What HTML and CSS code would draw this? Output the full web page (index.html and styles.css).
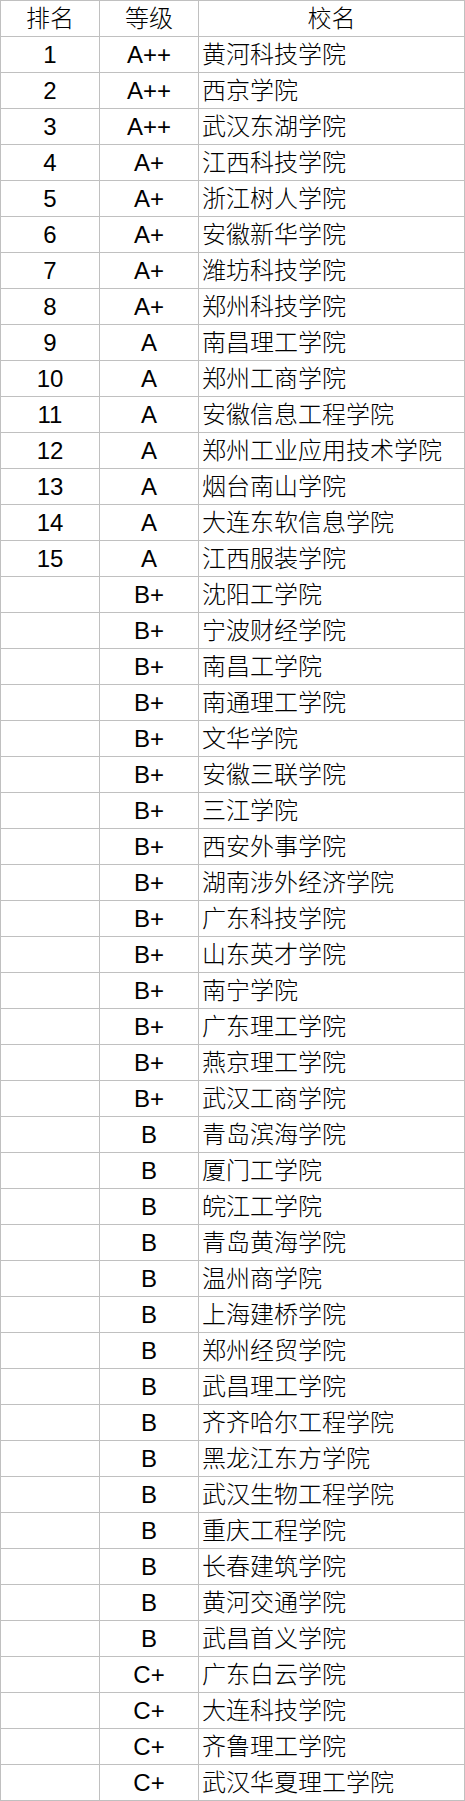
FILE: index.html
```html
<!DOCTYPE html>
<html lang="zh-CN">
<head>
<meta charset="utf-8">
<title>排名</title>
<link rel="stylesheet" href="styles.css">
</head>
<body>
<div class="sheet">
  <div class="c head">排名</div><div class="c head">等级</div><div class="c head">校名</div>
  <div class="c">1</div><div class="c">A++</div><div class="c name">黄河科技学院</div>
  <div class="c">2</div><div class="c">A++</div><div class="c name">西京学院</div>
  <div class="c">3</div><div class="c">A++</div><div class="c name">武汉东湖学院</div>
  <div class="c">4</div><div class="c">A+</div><div class="c name">江西科技学院</div>
  <div class="c">5</div><div class="c">A+</div><div class="c name">浙江树人学院</div>
  <div class="c">6</div><div class="c">A+</div><div class="c name">安徽新华学院</div>
  <div class="c">7</div><div class="c">A+</div><div class="c name">潍坊科技学院</div>
  <div class="c">8</div><div class="c">A+</div><div class="c name">郑州科技学院</div>
  <div class="c">9</div><div class="c">A</div><div class="c name">南昌理工学院</div>
  <div class="c">10</div><div class="c">A</div><div class="c name">郑州工商学院</div>
  <div class="c">11</div><div class="c">A</div><div class="c name">安徽信息工程学院</div>
  <div class="c">12</div><div class="c">A</div><div class="c name">郑州工业应用技术学院</div>
  <div class="c">13</div><div class="c">A</div><div class="c name">烟台南山学院</div>
  <div class="c">14</div><div class="c">A</div><div class="c name">大连东软信息学院</div>
  <div class="c">15</div><div class="c">A</div><div class="c name">江西服装学院</div>
  <div class="c"></div><div class="c">B+</div><div class="c name">沈阳工学院</div>
  <div class="c"></div><div class="c">B+</div><div class="c name">宁波财经学院</div>
  <div class="c"></div><div class="c">B+</div><div class="c name">南昌工学院</div>
  <div class="c"></div><div class="c">B+</div><div class="c name">南通理工学院</div>
  <div class="c"></div><div class="c">B+</div><div class="c name">文华学院</div>
  <div class="c"></div><div class="c">B+</div><div class="c name">安徽三联学院</div>
  <div class="c"></div><div class="c">B+</div><div class="c name">三江学院</div>
  <div class="c"></div><div class="c">B+</div><div class="c name">西安外事学院</div>
  <div class="c"></div><div class="c">B+</div><div class="c name">湖南涉外经济学院</div>
  <div class="c"></div><div class="c">B+</div><div class="c name">广东科技学院</div>
  <div class="c"></div><div class="c">B+</div><div class="c name">山东英才学院</div>
  <div class="c"></div><div class="c">B+</div><div class="c name">南宁学院</div>
  <div class="c"></div><div class="c">B+</div><div class="c name">广东理工学院</div>
  <div class="c"></div><div class="c">B+</div><div class="c name">燕京理工学院</div>
  <div class="c"></div><div class="c">B+</div><div class="c name">武汉工商学院</div>
  <div class="c"></div><div class="c">B</div><div class="c name">青岛滨海学院</div>
  <div class="c"></div><div class="c">B</div><div class="c name">厦门工学院</div>
  <div class="c"></div><div class="c">B</div><div class="c name">皖江工学院</div>
  <div class="c"></div><div class="c">B</div><div class="c name">青岛黄海学院</div>
  <div class="c"></div><div class="c">B</div><div class="c name">温州商学院</div>
  <div class="c"></div><div class="c">B</div><div class="c name">上海建桥学院</div>
  <div class="c"></div><div class="c">B</div><div class="c name">郑州经贸学院</div>
  <div class="c"></div><div class="c">B</div><div class="c name">武昌理工学院</div>
  <div class="c"></div><div class="c">B</div><div class="c name">齐齐哈尔工程学院</div>
  <div class="c"></div><div class="c">B</div><div class="c name">黑龙江东方学院</div>
  <div class="c"></div><div class="c">B</div><div class="c name">武汉生物工程学院</div>
  <div class="c"></div><div class="c">B</div><div class="c name">重庆工程学院</div>
  <div class="c"></div><div class="c">B</div><div class="c name">长春建筑学院</div>
  <div class="c"></div><div class="c">B</div><div class="c name">黄河交通学院</div>
  <div class="c"></div><div class="c">B</div><div class="c name">武昌首义学院</div>
  <div class="c"></div><div class="c">C+</div><div class="c name">广东白云学院</div>
  <div class="c"></div><div class="c">C+</div><div class="c name">大连科技学院</div>
  <div class="c"></div><div class="c">C+</div><div class="c name">齐鲁理工学院</div>
  <div class="c"></div><div class="c">C+</div><div class="c name">武汉华夏理工学院</div>
</div>
</body>
</html>
```
FILE: styles.css
```css
html, body {
  margin: 0;
  padding: 0;
  background: #ffffff;
}
.sheet {
  display: grid;
  grid-template-columns: 98px 98px 265px;
  grid-auto-rows: 35px;
  gap: 1px;
  padding: 1px;
  width: 463px;
  background: #c0c0c0;
  font-family: "Liberation Sans", "Noto Sans CJK SC", sans-serif;
  font-size: 24px;
  color: #000000;
}
.c {
  background: #ffffff;
  line-height: 35px;
  text-align: center;
  white-space: nowrap;
  overflow: hidden;
}
.name {
  text-align: left;
  padding-left: 3px;
  font-weight: 300;
}
.head {
  text-align: center;
  font-weight: 300;
}
```
